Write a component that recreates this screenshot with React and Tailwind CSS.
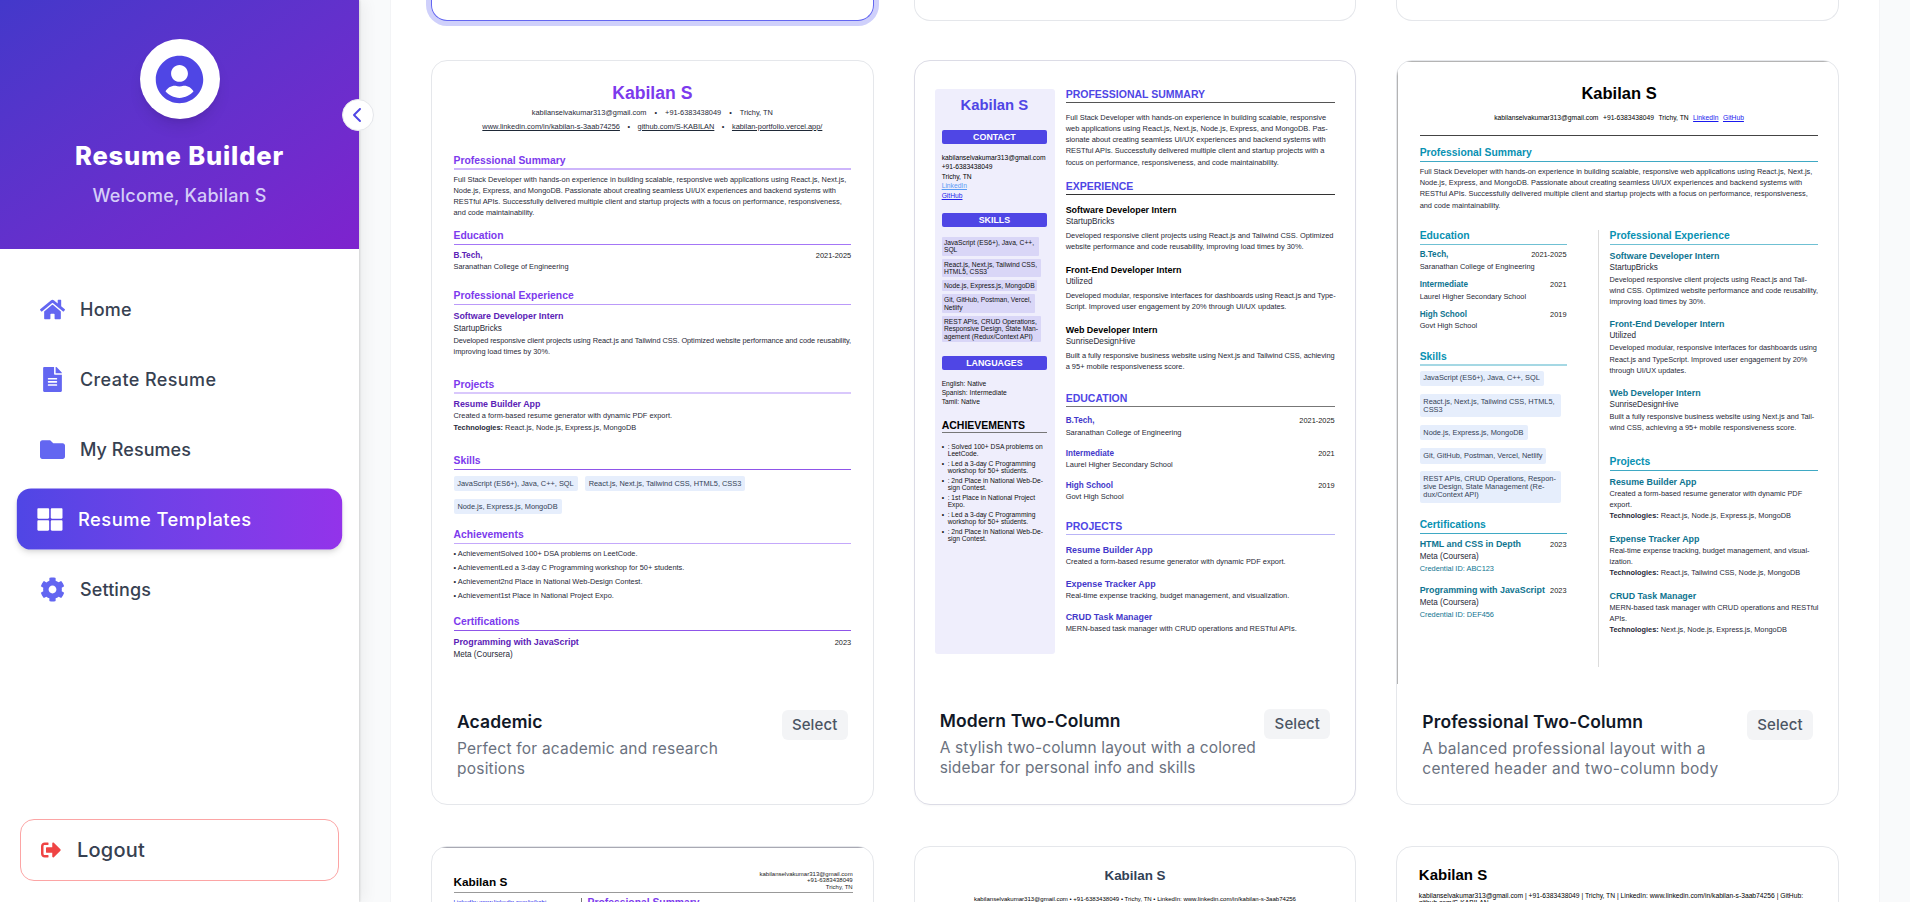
import {
  FaCog,
  FaFileAlt,
  FaFolder,
  FaHome,
  FaSignOutAlt,
  FaThLarge,
  FaUserCircle,
} from "react-icons/fa";
import { FaChevronLeft } from "react-icons/fa6";

const navItems = [
  { label: "Home", icon: FaHome, tracking: "tracking-[0.25px]" },
  { label: "Create Resume", icon: FaFileAlt, tracking: "tracking-[0.4px]" },
  { label: "My Resumes", icon: FaFolder, tracking: "tracking-[0.05px]" },
  { label: "Resume Templates", icon: FaThLarge, tracking: "tracking-[0.45px]", active: true },
  { label: "Settings", icon: FaCog, tracking: "tracking-[0.1px]" },
];

function NavItem({ label, icon: Icon, tracking, active }) {
  const state = active
    ? "scale-[1.02] bg-linear-to-r from-[#4f46e5] to-[#9333ea] text-white shadow-md"
    : "text-[#374151]";
  return (
    <a className={`mx-5 flex h-[60px] items-center gap-[15px] rounded-[14px] pl-5 ${state}`}>
      <Icon className={`size-[25px] ${active ? "text-white" : "text-[#6366f1]"}`} />
      <span className={`text-[18px] font-medium ${tracking}`}>{label}</span>
    </a>
  );
}

function Sidebar() {
  return (
    <aside className="relative z-10 flex h-full w-[359px] shrink-0 flex-col bg-white font-[Inter,sans-serif] shadow-[1px_0_2px_rgba(0,0,0,0.12),6px_0_14px_rgba(0,0,0,0.05)]">
      <div className="flex h-[249px] flex-col items-center bg-linear-to-br from-[#4338ca] to-[#7e22ce] pt-[39px]">
        <div className="flex size-20 items-center justify-center rounded-full bg-white shadow-lg">
          <FaUserCircle className="size-[49px] text-[#4f46e5]" />
        </div>
        <h1 className="mt-[21px] h-8 text-[25.5px] leading-8 font-extrabold tracking-[0.85px] whitespace-nowrap text-white">
          Resume Builder
        </h1>
        <p className="mt-3 h-6 text-[18px] leading-6 font-medium tracking-[0.2px] text-[#d5cdf8]">
          Welcome, Kabilan S
        </p>
      </div>
      <button className="absolute top-[99px] left-[342px] flex size-8 items-center justify-center rounded-full border border-[#e5e7eb] bg-white">
        <FaChevronLeft className="size-4 text-[#4f46e5]" />
      </button>
      <nav className="mt-[30px] flex flex-1 flex-col gap-[10px]">
        {navItems.map((item) => (
          <NavItem key={item.label} {...item} />
        ))}
      </nav>
      <button className="mx-5 mb-[21px] flex h-[62px] items-center gap-4 rounded-[14px] border border-[#fca5a5] pl-5 text-[#374151]">
        <FaSignOutAlt className="size-5 text-[#ef4444]" />
        <span className="text-[20px] font-medium tracking-[0.2px]">Logout</span>
      </button>
    </aside>
  );
}

function Heading({ children, className, size = "text-[10.35px]" }) {
  return (
    <h2 className={`h-[15px] leading-[12px] font-bold whitespace-nowrap ${size} ${className}`}>
      {children}
    </h2>
  );
}

function Split({ left, right, className }) {
  return (
    <div className="flex h-3 items-center justify-between whitespace-nowrap">
      <span className={`font-bold ${className}`}>{left}</span>
      <span className="text-[7.4px] text-[#222]">{right}</span>
    </div>
  );
}

/* ---------- Academic ---------- */

function AcademicPreview() {
  const h = "text-[#7c3aed]";
  const title = "h-3 text-[8.9px] leading-3 font-bold text-[#5b21b6]";
  const chip = "flex h-[15px] items-center justify-center rounded-[2px] bg-[#e6eefc] text-[#334155]";
  return (
    <div className="h-[623px] pt-[21px] pr-[21.5px] pl-[21.5px] font-['Liberation_Sans',sans-serif] text-[7.4px] leading-[11px] whitespace-nowrap text-[#1f2937]">
      <div className="h-[22px] text-center text-[17.6px] leading-[22px] font-bold text-[#7c3aed]">
        Kabilan S
      </div>
      <div className="mt-px flex h-[14px] items-center justify-center gap-[8px]">
        <span>kabilanselvakumar313@gmail.com</span>
        <span>•</span>
        <span>+91-6383438049</span>
        <span>•</span>
        <span>Trichy, TN</span>
      </div>
      <div className="flex h-[14px] items-center justify-center gap-[7.5px]">
        <span className="underline">www.linkedin.com/in/kabilan-s-3aab74256</span>
        <span>•</span>
        <span className="underline">github.com/S-KABILAN</span>
        <span>•</span>
        <span className="underline">kabilan-portfolio.vercel.app/</span>
      </div>
      <Heading className={`${h} mt-[22px] border-b-2 border-[#cdb5fb]`}>Professional Summary</Heading>
      <p className="mt-1">
        Full Stack Developer with hands-on experience in building scalable, responsive web applications using React.js, Next.js,
        <br />
        Node.js, Express, and MongoDB. Passionate about creating seamless UI/UX experiences and backend systems with
        <br />
        RESTful APIs. Successfully delivered multiple client and startup projects with a focus on performance, responsiveness,
        <br />
        and code maintainability.
      </p>
      <Heading className={`${h} mt-3 border-b border-[#a476f6]`}>Education</Heading>
      <div className="mt-1">
        <Split left="B.Tech," right="2021-2025" className="text-[8.2px] text-[#5b21b6]" />
        <p className="h-3 leading-3">Saranathan College of Engineering</p>
      </div>
      <Heading className={`${h} mt-[17px] border-b border-[#bb9af9]`}>Professional Experience</Heading>
      <p className={`${title} mt-[5px]`}>Software Developer Intern</p>
      <p className="h-[13px] text-[8.15px] leading-[13px]">StartupBricks</p>
      <p>
        <span className="tracking-[-0.07px]">
          Developed responsive client projects using React.js and Tailwind CSS. Optimized website performance and code reusability,
        </span>
        <br />
        improving load times by 30%.
      </p>
      <Heading className={`${h} mt-[22px] border-b-2 border-[#d9c8fc]`}>Projects</Heading>
      <p className={`${title} mt-1`}>Resume Builder App</p>
      <p className="h-3 leading-3">Created a form-based resume generator with dynamic PDF export.</p>
      <p>
        <b>Technologies:</b> React.js, Node.js, Express.js, MongoDB
      </p>
      <Heading className={`${h} mt-[22px] border-b border-[#8f55e9]`}>Skills</Heading>
      <div className="mt-[6px] flex flex-wrap gap-x-[7.5px] gap-y-2">
        <span className={`${chip} w-[124px]`}>JavaScript (ES6+), Java, C++, SQL</span>
        <span className={`${chip} w-[160px]`}>React.js, Next.js, Tailwind CSS, HTML5, CSS3</span>
        <span className="w-20" />
        <span className={`${chip} w-[108px]`}>Node.js, Express.js, MongoDB</span>
      </div>
      <Heading className={`${h} mt-[15px] border-b border-[#c4a8fb]`}>Achievements</Heading>
      <ul className="mt-[3px] leading-[14px]">
        <li>• AchievementSolved 100+ DSA problems on LeetCode.</li>
        <li>• AchievementLed a 3-day C Programming workshop for 50+ students.</li>
        <li>• Achievement2nd Place in National Web-Design Contest.</li>
        <li>• Achievement1st Place in National Project Expo.</li>
      </ul>
      <Heading className={`${h} mt-[13px] border-b border-[#8f55e9]`}>Certifications</Heading>
      <div className="mt-[5px]">
        <Split left="Programming with JavaScript" right="2023" className="text-[8.9px] text-[#5b21b6]" />
        <p className="h-[13px] text-[8.15px] leading-[13px]">Meta (Coursera)</p>
      </div>
    </div>
  );
}

/* ---------- Modern two-column ---------- */

function Pill({ children, className }) {
  return (
    <div
      className={`h-[14px] rounded-[2px] bg-[#4f46e5] text-center text-[8.85px] leading-[14px] font-bold text-white ${className}`}
    >
      {children}
    </div>
  );
}

const modernJobs = [
  ["Software Developer Intern", "StartupBricks", "Developed responsive client projects using React.js and Tailwind CSS. Optimized", "website performance and code reusability, improving load times by 30%.", ""],
  ["Front-End Developer Intern", "Utilized", "Developed modular, responsive interfaces for dashboards using React.js and Type-", "Script. Improved user engagement by 20% through UI/UX updates.", "tracking-[-0.05px]"],
  ["Web Developer Intern", "SunriseDesignHive", "Built a fully responsive business website using Next.js and Tailwind CSS, achieving", "a 95+ mobile responsiveness score.", "tracking-[-0.05px]"],
];

const schools = [
  ["B.Tech,", "2021-2025", "Saranathan College of Engineering"],
  ["Intermediate", "2021", "Laurel Higher Secondary School"],
  ["High School", "2019", "Govt High School"],
];

const modernProjects = [
  ["Resume Builder App", "Created a form-based resume generator with dynamic PDF export."],
  ["Expense Tracker App", "Real-time expense tracking, budget management, and visualization."],
  ["CRUD Task Manager", "MERN-based task manager with CRUD operations and RESTful APIs."],
];

const modernSkills = [
  { width: "w-[97px]", lines: ["JavaScript (ES6+), Java, C++,", "SQL"] },
  { width: "w-[99.5px]", lines: ["React.js, Next.js, Tailwind CSS,", "HTML5, CSS3"] },
  { width: "w-[95px]", lines: ["Node.js, Express.js, MongoDB"] },
  { width: "w-[93px]", lines: ["Git, GitHub, Postman, Vercel,", "Netlify"] },
  { width: "w-[99.5px]", lines: ["REST APIs, CRUD Operations,", "Responsive Design, State Man-", "agement (Redux/Context API)"] },
];

const modernAwards = [
  [": Solved 100+ DSA problems on", "LeetCode."],
  [": Led a 3-day C Programming", "workshop for 50+ students."],
  [": 2nd Place in National Web-De-", "sign Contest."],
  [": 1st Place in National Project", "Expo."],
  [": Led a 3-day C Programming", "workshop for 50+ students."],
  [": 2nd Place in National Web-De-", "sign Contest."],
];

function ModernPreview() {
  const h = "text-[#4f46e5]";
  const size = "text-[10.5px]";
  return (
    <div className="flex h-[623px] pl-[20px] font-['Liberation_Sans',sans-serif] text-[7.45px] leading-[11px] whitespace-nowrap text-[#1f2937]">
      <div className="mt-7 h-[565px] w-[120px] rounded-[3px] bg-[#efeefc] pt-[7px] pr-[7.5px] pl-[7px] text-[6.7px]">
        <div className="h-[18px] text-center text-[14.85px] leading-[18px] font-bold text-[#4f46e5]">
          Kabilan S
        </div>
        <Pill className="mt-4">CONTACT</Pill>
        <div className="mt-[8.6px] leading-[9.6px] text-black">
          <p>kabilanselvakumar313@gmail.com</p>
          <p>+91-6383438049</p>
          <p>Trichy, TN</p>
          <p className="text-[#5b9bf5] underline">LinkedIn</p>
          <p className="text-[#2222ee] underline">GitHub</p>
        </div>
        <Pill className="mt-[12.4px]">SKILLS</Pill>
        <div className="mt-[10px] flex flex-col gap-[3px] leading-[7.3px] text-[#111]">
          {modernSkills.map((s) => (
            <div key={s.lines[0]} className={`rounded-[1px] bg-[#d9d6f7] py-[2px] pl-[2.3px] ${s.width}`}>
              {s.lines.map((l) => (
                <p key={l}>{l}</p>
              ))}
            </div>
          ))}
        </div>
        <Pill className="mt-[14.4px]">LANGUAGES</Pill>
        <div className="mt-[10px] leading-[8.9px] text-[#111]">
          <p>English: Native</p>
          <p>Spanish: Intermediate</p>
          <p>Tamil: Native</p>
        </div>
        <h2 className="mt-3 h-[14.4px] border-b border-[#777] text-[10.5px] leading-[12px] font-bold text-black">
          ACHIEVEMENTS
        </h2>
        <ul className="mt-[9.6px] flex flex-col gap-[2.4px] leading-[7.3px] text-[#111]">
          {modernAwards.map((a, i) => (
            <li key={i} className="flex">
              <span className="w-[6px]">•</span>
              <span>
                {a[0]}
                <br />
                {a[1]}
              </span>
            </li>
          ))}
        </ul>
      </div>
      <div className="ml-[11px] w-[269px] pt-[27px]">
        <Heading size={size} className={`${h} border-b border-[#555]`}>PROFESSIONAL SUMMARY</Heading>
        <p className="mt-[8.6px] leading-[11.25px]">
          Full Stack Developer with hands-on experience in building scalable, responsive
          <br />
          web applications using React.js, Next.js, Node.js, Express, and MongoDB. Pas-
          <br />
          sionate about creating seamless UI/UX experiences and backend systems with
          <br />
          RESTful APIs. Successfully delivered multiple client and startup projects with a
          <br />
          focus on performance, responsiveness, and code maintainability.
        </p>
        <Heading size={size} className={`${h} mt-[12.1px] border-b border-[#333]`}>EXPERIENCE</Heading>
        <div className="mt-[9px] flex flex-col gap-3">
          {modernJobs.map(([role, org, a, b, tracking]) => (
            <div key={role}>
              <p className="h-3 text-[8.95px] leading-3 font-bold text-black">{role}</p>
              <p className="mb-[1.6px] h-3 text-[8.2px] leading-3">{org}</p>
              <p className={tracking}>{a}</p>
              <p className="mb-[0.4px]">{b}</p>
            </div>
          ))}
        </div>
        <Heading size={size} className={`${h} mt-5 border-b border-[#777]`}>EDUCATION</Heading>
        <div className="mt-2 flex flex-col gap-[8.3px]">
          {schools.map(([name, year, place]) => (
            <div key={name}>
              <Split left={name} right={year} className="text-[8.15px] text-[#4338ca]" />
              <p className="h-3 leading-3">{place}</p>
            </div>
          ))}
        </div>
        <Heading size={size} className={`${h} mt-[16.4px] border-b border-[#b9b4f6]`}>PROJECTS</Heading>
        <div className="mt-[9px] flex flex-col gap-[9.7px]">
          {modernProjects.map(([name, text]) => (
            <div key={name}>
              <p className="h-3 text-[8.9px] leading-3 font-bold text-[#4338ca]">{name}</p>
              <p className="h-3 leading-3">{text}</p>
            </div>
          ))}
        </div>
      </div>
    </div>
  );
}

/* ---------- Professional two-column ---------- */

const proSkills = [
  { width: "w-[124px]", lines: ["JavaScript (ES6+), Java, C++, SQL"] },
  { width: "w-[141px]", lines: ["React.js, Next.js, Tailwind CSS, HTML5,", "CSS3"] },
  { width: "w-[108.5px]", lines: ["Node.js, Express.js, MongoDB"] },
  { width: "w-[126.5px]", lines: ["Git, GitHub, Postman, Vercel, Netlify"] },
  { width: "w-[141.5px]", lines: ["REST APIs, CRUD Operations, Respon-", "sive Design, State Management (Re-", "dux/Context API)"] },
];

const proCerts = [
  ["HTML and CSS in Depth", "Credential ID: ABC123"],
  ["Programming with JavaScript", "Credential ID: DEF456"],
];

const proJobs = [
  ["Software Developer Intern", "StartupBricks", ["Developed responsive client projects using React.js and Tail-", "wind CSS. Optimized website performance and code reusability,", "improving load times by 30%."]],
  ["Front-End Developer Intern", "Utilized", ["Developed modular, responsive interfaces for dashboards using", "React.js and TypeScript. Improved user engagement by 20%", "through UI/UX updates."]],
  ["Web Developer Intern", "SunriseDesignHive", ["Built a fully responsive business website using Next.js and Tail-", "wind CSS, achieving a 95+ mobile responsiveness score."]],
];

const proProjects = [
  ["Resume Builder App", ["Created a form-based resume generator with dynamic PDF", "export."], "React.js, Node.js, Express.js, MongoDB"],
  ["Expense Tracker App", ["Real-time expense tracking, budget management, and visual-", "ization."], "React.js, Tailwind CSS, Node.js, MongoDB"],
  ["CRUD Task Manager", ["MERN-based task manager with CRUD operations and RESTful", "APIs."], "Next.js, Node.js, Express.js, MongoDB"],
];

function ProfessionalPreview() {
  const h = "text-[#0891b2]";
  const title = "h-3 text-[8.9px] leading-3 font-bold text-[#0e7490]";
  return (
    <div className="h-[623px] border-t border-l border-[#b4b4b4] pt-[21px] pr-[19.5px] pl-[21.3px] font-['Liberation_Sans',sans-serif] text-[7.4px] leading-[11.2px] whitespace-nowrap text-[#1f2937]">
      <div className="h-5 text-center text-[16.5px] leading-5 font-bold text-black">Kabilan S</div>
      <div className="mt-[9px] flex h-3 items-center justify-center gap-[4.5px] text-[6.73px] text-black">
        <span>kabilanselvakumar313@gmail.com</span>
        <span>+91-6383438049</span>
        <span>Trichy, TN</span>
        <span className="text-[#1a1aee] underline">LinkedIn</span>
        <span className="text-[#1a1aee] underline">GitHub</span>
      </div>
      <div className="mt-[11px] h-px bg-[#444]" />
      <Heading className={`${h} mt-[11px] border-b border-[#3fa9c4]`}>Professional Summary</Heading>
      <p className="mt-1">
        Full Stack Developer with hands-on experience in building scalable, responsive web applications using React.js, Next.js,
        <br />
        Node.js, Express, and MongoDB. Passionate about creating seamless UI/UX experiences and backend systems with
        <br />
        RESTful APIs. Successfully delivered multiple client and startup projects with a focus on performance, responsiveness,
        <br />
        and code maintainability.
      </p>
      <div className="mt-[19px] flex h-[437px]">
        <div className="w-[181.5px] border-r border-[#dcdcdc] pr-[31px]">
          <Heading className={`${h} border-b border-[#6fc0d3]`}>Education</Heading>
          <div className="mt-1 flex flex-col gap-[5.8px]">
            {schools.map(([name, year, place]) => (
              <div key={name}>
                <Split left={name} right={year} className="text-[8.15px] text-[#0e7490]" />
                <p className="h-3 leading-3">{place}</p>
              </div>
            ))}
          </div>
          <Heading className={`${h} mt-[18.4px] border-b-2 border-[#a5d8e4]`}>Skills</Heading>
          <div className="mt-[5px] flex flex-col gap-[7.6px] leading-[8.1px] text-[#334155]">
            {proSkills.map((s) => (
              <div key={s.lines[0]} className={`rounded-[2px] bg-[#e6eefc] py-[3.7px] pl-[3.7px] ${s.width}`}>
                {s.lines.map((l) => (
                  <p key={l}>{l}</p>
                ))}
              </div>
            ))}
          </div>
          <Heading className={`${h} mt-[15.8px] border-b border-[#3fa9c4]`}>Certifications</Heading>
          <div className="mt-[5px] flex flex-col gap-[10.4px]">
            {proCerts.map(([name, id]) => (
              <div key={name}>
                <Split left={name} right="2023" className="text-[8.9px] text-[#0e7490]" />
                <p className="h-3 text-[8.15px] leading-3">Meta (Coursera)</p>
                <p className="h-3 leading-3 text-[#0e7490]">{id}</p>
              </div>
            ))}
          </div>
        </div>
        <div className="flex-1 pl-[11px] text-[7.35px]">
          <Heading className={`${h} border-b border-[#6fc0d3]`}>Professional Experience</Heading>
          <div className="mt-[5px] flex flex-col gap-[11px]">
            {proJobs.map(([role, org, lines]) => (
              <div key={role}>
                <p className={title}>{role}</p>
                <p className="h-3 text-[8.15px] leading-3">{org}</p>
                {lines.map((l) => (
                  <p key={l}>{l}</p>
                ))}
              </div>
            ))}
          </div>
          <Heading className={`${h} mt-[22.4px] border-b border-[#3fa9c4]`}>Projects</Heading>
          <div className="mt-[5px] flex flex-col gap-[11.3px]">
            {proProjects.map(([name, lines, tech]) => (
              <div key={name}>
                <p className={title}>{name}</p>
                {lines.map((l) => (
                  <p key={l}>{l}</p>
                ))}
                <p>
                  <b>Technologies:</b> {tech}
                </p>
              </div>
            ))}
          </div>
        </div>
      </div>
    </div>
  );
}

/* ---------- Third row previews ---------- */

function ClassicPreview() {
  return (
    <div className="border-t border-[#a9a9b3] pr-[20px] pl-[21.5px] font-['Liberation_Sans',sans-serif] text-[6px] leading-[6.3px] whitespace-nowrap text-[#222]">
      <div className="flex h-[45px] items-end justify-between border-b border-[#999] pb-[2px]">
        <div className="h-4 text-[11.8px] leading-4 font-bold text-black">Kabilan S</div>
        <div className="text-right">
          kabilanselvakumar313@gmail.com
          <br />
          +91-6383438049
          <br />
          Trichy, TN
        </div>
      </div>
      <div className="flex pt-[5px]">
        <div className="w-[128px] border-r border-[#777] pt-px text-[#2222ee]">LinkedIn: www.linkedin.com/in/kabi-</div>
        <div className="pl-[6px] text-[10.35px] leading-[10px] font-bold text-[#7c3aed]">Professional Summary</div>
      </div>
    </div>
  );
}

function CenteredPreview() {
  return (
    <div className="pt-[20px] text-center font-['Liberation_Sans',sans-serif] whitespace-nowrap">
      <div className="h-[18px] text-[13.4px] leading-[18px] font-bold text-[#334155]">Kabilan S</div>
      <div className="mt-[9.5px] text-[6.06px] leading-[9px] text-black">
        kabilanselvakumar313@gmail.com • +91-6383438049 • Trichy, TN • LinkedIn: www.linkedin.com/in/kabilan-s-3aab74256
      </div>
    </div>
  );
}

function SimplePreview() {
  return (
    <div className="pt-[19px] pl-[21.5px] font-['Liberation_Sans',sans-serif] whitespace-nowrap text-black">
      <div className="h-[18px] text-[15px] leading-[18px] font-bold">Kabilan S</div>
      <div className="mt-[7.5px] text-[6.73px] leading-[7.5px]">
        kabilanselvakumar313@gmail.com | +91-6383438049 | Trichy, TN | LinkedIn: www.linkedin.com/in/kabilan-s-3aab74256 | GitHub:
        <br />
        github.com/S-KABILAN
      </div>
    </div>
  );
}

function TemplateCard({ title, lines, tracking, preview, infoTop = "pt-[26px]", className = "border-[#e5e7eb]" }) {
  return (
    <article className={`h-[745px] overflow-hidden rounded-[16px] border bg-white ${className}`}>
      {preview}
      <div className={`flex items-start justify-between px-[25px] font-[Inter,sans-serif] ${infoTop}`}>
        <div className="w-0 whitespace-nowrap">
          <h3 className="h-6 text-[17.5px] leading-6 font-semibold tracking-[0.1px] text-[#111827]">{title}</h3>
          <p className={`mt-[5px] text-[15.5px] leading-5 text-[#6b7280] ${tracking}`}>
            {lines[0]}
            <br />
            {lines[1]}
          </p>
        </div>
        <button className="h-[30px] w-[66px] rounded-[6px] bg-[#f3f4f6] text-[15px] font-medium tracking-[0.1px] text-[#4b5563]">
          Select
        </button>
      </div>
    </article>
  );
}

export default function App() {
  return (
    <div className="flex h-screen overflow-hidden bg-[#f9fafb]">
      <Sidebar />
      <main className="flex-1 pr-[30px] pl-[31px]">
        <div className="h-full overflow-hidden border-x border-[#f3f4f6] bg-white px-[40px]">
          <div className="grid grid-cols-3 gap-x-10">
            <div className="h-[21px] rounded-b-[16px] border border-t-0 border-[#6366f1] ring-5 ring-[#cfd0fb]" />
            <div className="h-[21px] rounded-b-[16px] border border-t-0 border-[#e5e7eb]" />
            <div className="h-[21px] rounded-b-[16px] border border-t-0 border-[#e5e7eb]" />
          </div>
          <div className="mt-[39px] grid grid-cols-3 gap-x-10">
            <TemplateCard
              title="Academic"
              lines={["Perfect for academic and research", "positions"]}
              tracking="tracking-[0.22px]"
              preview={<AcademicPreview />}
            />
            <TemplateCard
              title="Modern Two-Column"
              lines={["A stylish two-column layout with a colored", "sidebar for personal info and skills"]}
              tracking="tracking-[0.13px]"
              preview={<ModernPreview />}
              infoTop="pt-[25px]"
              className="border-[#dcdce6] shadow-[0_1px_2px_rgba(0,0,0,0.03)]"
            />
            <TemplateCard
              title="Professional Two-Column"
              lines={["A balanced professional layout with a", "centered header and two-column body"]}
              tracking="tracking-[0.28px]"
              preview={<ProfessionalPreview />}
            />
          </div>
          <div className="mt-[41px] grid h-14 grid-cols-3 gap-x-10 overflow-hidden">
            {[ClassicPreview, CenteredPreview, SimplePreview].map((Preview, i) => (
              <div key={i} className="h-20 overflow-hidden rounded-t-[16px] border border-[#e5e7eb]">
                <Preview />
              </div>
            ))}
          </div>
        </div>
      </main>
    </div>
  );
}
